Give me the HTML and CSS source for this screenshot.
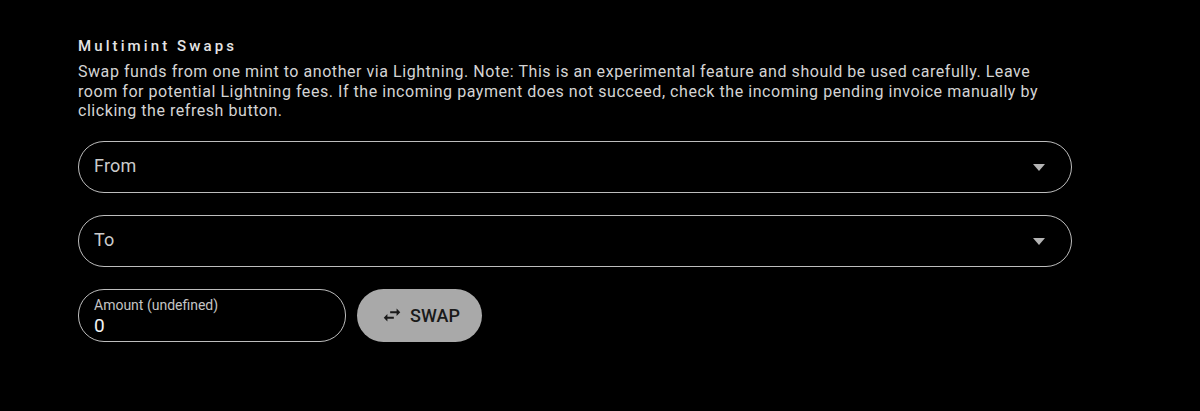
FILE: index.html
```html
<!DOCTYPE html>
<html>
<head>
<meta charset="utf-8">
<link rel="stylesheet" href="styles.css">
</head>
<body>
<section class="panel">
  <div class="title">Multimint Swaps</div>
  <p class="desc">Swap funds from one mint to another via Lightning. Note: This is an experimental feature and should be used carefully. Leave room for potential Lightning fees. If the incoming payment does not succeed, check the incoming pending invoice manually by clicking the refresh button.</p>
  <div class="select">
    <span class="select-label">From</span>
    <svg class="caret" viewBox="0 0 12 7" width="12" height="7"><path d="M0 0h12L6 7z" fill="#b4b4b4"/></svg>
  </div>
  <div class="select">
    <span class="select-label">To</span>
    <svg class="caret" viewBox="0 0 12 7" width="12" height="7"><path d="M0 0h12L6 7z" fill="#b4b4b4"/></svg>
  </div>
  <div class="row">
    <div class="amount">
      <span class="amount-label">Amount (undefined)</span>
      <span class="amount-value">0</span>
    </div>
    <button class="swap">
      <svg viewBox="0 0 24 24" width="24" height="24"><path d="M6.99 11L3 15l3.99 4v-3H14v-2H6.99v-3zM21 9l-4-4v3H10v2h7v3l4-4z" fill="#1a1a1a"/></svg>
      <span>SWAP</span>
    </button>
  </div>
</section>
</body>
</html>
```
FILE: styles.css
```css
html, body {
  margin: 0;
  background: #000;
}
body {
  font-family: Roboto, "Liberation Sans", sans-serif;
  width: 1200px;
  height: 411px;
  overflow: hidden;
}
.panel {
  padding: 36px 0 0 78px;
  width: 994px;
}
.title {
  font-size: 15px;
  font-weight: 500;
  letter-spacing: 3.1px;
  color: #e4e4e4;
  line-height: 20px;
}
.desc {
  margin: 6px 0 0 0;
  font-size: 16px;
  line-height: 19.5px;
  letter-spacing: 0.55px;
  color: #d4d4d4;
  width: 994px;
}
.select {
  margin-top: 20px;
  height: 50px;
  border: 1px solid #bdbdbd;
  border-radius: 26px;
  display: flex;
  align-items: center;
  justify-content: space-between;
  padding: 0 26px 0 15px;
}
.select + .select {
  margin-top: 22px;
}
.select-label {
  font-size: 18px;
  letter-spacing: 0.2px;
  color: #cbcbcb;
  margin-top: -3px;
}
.caret {
  margin-top: 2px;
}
.row {
  margin-top: 22px;
  display: flex;
  gap: 11px;
  align-items: stretch;
}
.amount {
  border: 1px solid #bdbdbd;
  border-radius: 26px;
  display: flex;
  flex-direction: column;
  padding-left: 15px;
  box-sizing: border-box;
  width: 268px;
  height: 53px;
}
.amount-label {
  font-size: 14px;
  color: #c4c4c4;
  margin-top: 7px;
  line-height: 17px;
}
.amount-value {
  font-size: 19px;
  color: #f4f4f4;
  line-height: 22px;
  margin-top: 1px;
}
.swap {
  width: 125px;
  height: 53px;
  border: none;
  border-radius: 27px;
  background: #a9a9a9;
  color: #1a1a1a;
  font-family: Roboto, "Liberation Sans", sans-serif;
  font-size: 18px;
  font-weight: 500;
  display: flex;
  align-items: center;
  justify-content: center;
  gap: 7px;
  padding: 0 0 0 2px;
}
.swap svg {
  width: 22px;
  height: 22px;
}
```
